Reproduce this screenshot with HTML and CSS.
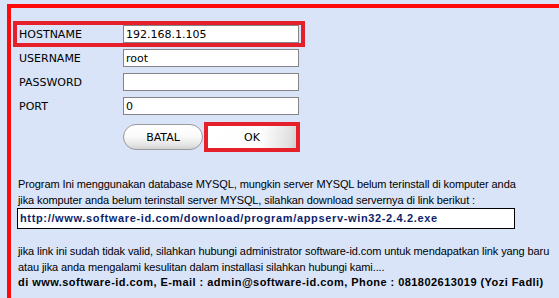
FILE: index.html
```html
<!DOCTYPE html>
<html>
<head>
<meta charset="utf-8">
<title>Koneksi Database</title>
<link rel="stylesheet" href="styles.css">
</head>
<body>
<div class="frame">
  <form class="login">
    <div class="row row-hl"><label class="lbl">HOSTNAME</label><input class="field" type="text" value="192.168.1.105"></div>
    <div class="row"><label class="lbl">USERNAME</label><input class="field" type="text" value="root"></div>
    <div class="row"><label class="lbl">PASSWORD</label><input class="field" type="password" value=""></div>
    <div class="row"><label class="lbl">PORT</label><input class="field" type="text" value="0"></div>
    <div class="buttons">
      <button type="button" class="btn btn-batal">BATAL</button>
      <button type="button" class="btn btn-ok">OK</button>
    </div>
  </form>
  <div class="info">
    <p class="txt">Program Ini menggunakan database MYSQL, mungkin server MYSQL belum terinstall di komputer anda<br>jika komputer anda belum terinstall server MYSQL, silahkan download servernya di link berikut :</p>
    <div class="link">http://www.software-id.com/download/program/appserv-win32-2.4.2.exe</div>
    <p class="txt txt-2">jika link ini sudah tidak valid, silahkan hubungi administrator software-id.com untuk mendapatkan link yang baru<br>atau jika anda mengalami kesulitan dalam installasi silahkan hubungi kami....<br><b class="contact">di www.software-id.com, E-mail : admin@software-id.com, Phone : 081802613019 (Yozi Fadli)</b></p>
  </div>
</div>
</body>
</html>
```
FILE: styles.css
```css
html, body {
  margin: 0;
  padding: 0;
}
body {
  width: 559px;
  height: 298px;
  overflow: hidden;
  background: #d9e4f9;
}
.frame {
  margin: 4px 0 0 7px;
  border-top: 4px solid #ff0a0a;
  border-left: 4px solid #ff0a0a;
  height: 290px;
}
.login {
  padding: 17px 0 0 6px;
  display: flex;
  flex-direction: column;
  gap: 6px;
}
.row {
  display: flex;
  align-items: center;
  width: 284px;
  height: 18px;
}
.row-hl {
  outline: 4px solid #e6202a;
}
.lbl {
  width: 104px;
  padding-left: 2px;
  font: 11px "DejaVu Sans", sans-serif;
  color: #000;
}
.field {
  box-sizing: border-box;
  width: 176px;
  height: 18px;
  margin: 0;
  padding: 0 2px;
  border: 1px solid #858585;
  background: #fff;
  font: 11px "DejaVu Sans", sans-serif;
  color: #000;
  outline: none;
}
.buttons {
  display: flex;
  align-items: center;
  height: 30px;
  margin: 1px 0 0 106px;
}
.btn {
  box-sizing: border-box;
  margin: 0;
  padding: 0;
  font: 11px "DejaVu Sans", sans-serif;
  color: #000;
  cursor: pointer;
}
.btn-batal {
  width: 80px;
  height: 26px;
  border: 1px solid #9a9a9a;
  border-radius: 13px;
  background: linear-gradient(to bottom, #ffffff 0%, #fbfbfb 45%, #e6e6e6 80%, #d2d2d2 100%);
}
.btn-ok {
  width: 88px;
  height: 22px;
  margin-left: 5px;
  border: none;
  outline: 4px solid #e6202a;
  background: linear-gradient(100deg, #ffffff 0%, #fdfdfd 60%, #e2e2e2 90%, #d0d0d0 100%);
}
.info {
  padding: 24px 0 0 6px;
}
.txt {
  margin: 0;
  padding-left: 1px;
  font: 11px/16px "Liberation Sans", Arial, sans-serif;
  letter-spacing: -0.1px;
  color: #000;
  white-space: nowrap;
}
.txt-2 {
  margin-top: 15px;
  line-height: 15.5px;
}
.link {
  box-sizing: border-box;
  width: 498px;
  height: 21px;
  padding-left: 2px;
  border: 1px solid #000;
  background: #fff;
  font: bold 11px/19px "Liberation Sans", Arial, sans-serif;
  letter-spacing: 0.65px;
  color: #0c1f6c;
  white-space: nowrap;
}
.contact {
  font-weight: bold;
  letter-spacing: 0.45px;
}
```
